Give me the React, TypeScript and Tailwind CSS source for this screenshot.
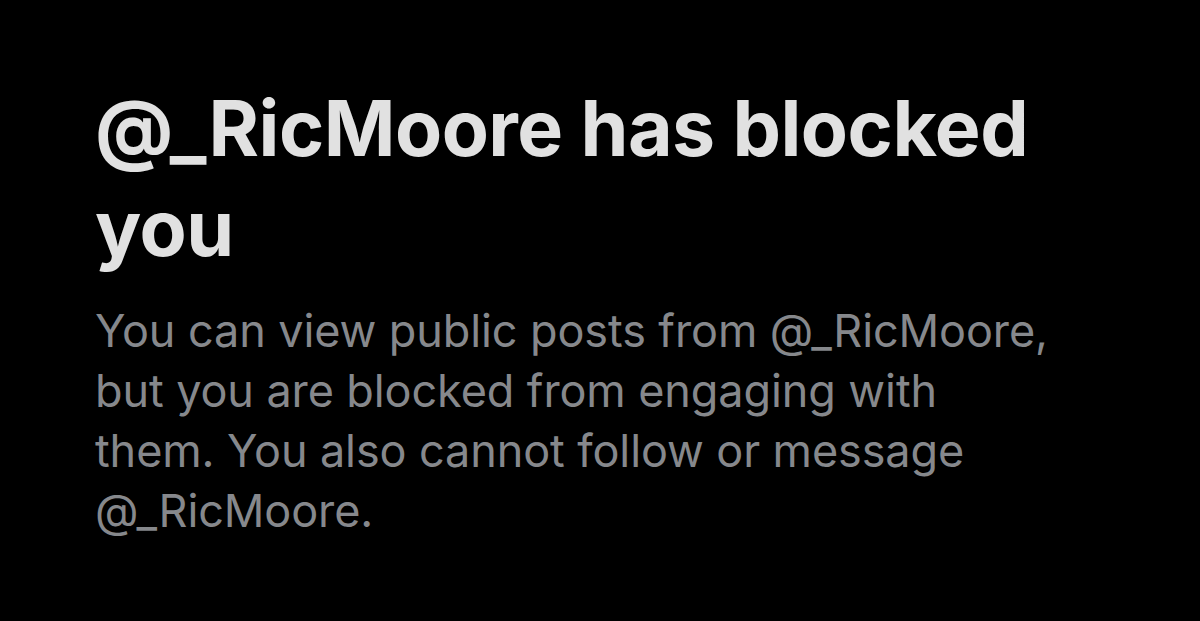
export default function App() {
  return (
    <div className="h-[621px] w-[1200px] overflow-hidden bg-black pl-[95px] pt-[78px] font-['Inter',sans-serif]">
      <h1 className="text-[77px] font-bold leading-[100px] tracking-[-0.5px] text-[#e1e1e1]">
        @_RicMoore has blocked
        <br />
        you
      </h1>
      <p className="mt-[23px] text-[45px] leading-[60px] tracking-[-0.1px] text-[#86888c]">
        You can view public posts from @_RicMoore,
        <br />
        but you are blocked from engaging with
        <br />
        them. You also cannot follow or message
        <br />
        @_RicMoore.
      </p>
    </div>
  );
}
